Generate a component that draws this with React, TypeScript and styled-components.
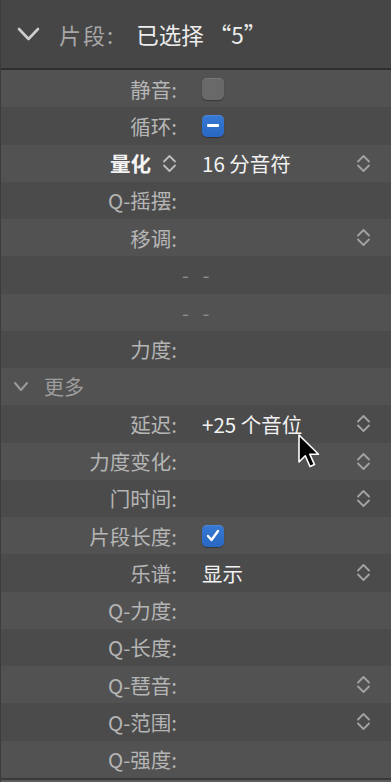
import React from 'react';
import styled, { createGlobalStyle } from 'styled-components';

const GlobalStyle = createGlobalStyle`
  html, body {
    margin: 0;
    padding: 0;
    background: #4c4c4c;
  }
  body {
    font-family: "Noto Sans CJK SC", "Noto Sans", sans-serif;
    -webkit-font-smoothing: antialiased;
  }
`;

const Panel = styled.div`
  position: relative;
  width: 391px;
  height: 782px;
  box-sizing: border-box;
  border-left: 1px solid #3c3c3c;
  background: #4c4c4c;
  overflow: hidden;
  display: flex;
  flex-direction: column;
`;

const Header = styled.div`
  height: 68px;
  flex: 0 0 68px;
  display: flex;
  align-items: center;
  padding-left: 16px;
  background: #464646;
  border-bottom: 2px solid #2e2e2e;
`;

const HeaderTitle = styled.span`
  margin-left: 19px;
  font-size: 22px;
  letter-spacing: 2px;
  color: #a7a7a7;
`;

const HeaderValue = styled.span`
  margin-left: 21px;
  font-size: 22.5px;
  color: #ededed;
`;

const Rows = styled.div`
  display: flex;
  flex-direction: column;
`;

const Row = styled.div<{ $light: boolean }>`
  height: 37.25px;
  flex: 0 0 37.25px;
  display: flex;
  align-items: center;
  background: ${({ $light }) => ($light ? '#525252' : '#4b4b4b')};
`;

const Label = styled.div<{ $bold?: boolean }>`
  width: 176px;
  flex: 0 0 176px;
  display: flex;
  justify-content: flex-end;
  align-items: center;
  gap: 11px;
  font-size: 20.5px;
  font-weight: ${({ $bold }) => ($bold ? 700 : 400)};
  color: ${({ $bold }) => ($bold ? '#f4f4f4' : '#b5b5b5')};
  white-space: nowrap;
`;

const Value = styled.div`
  flex: 1;
  margin-left: 25px;
  display: flex;
  align-items: center;
  font-size: 20.5px;
  color: #f2f2f2;
  white-space: nowrap;
`;

const StepperSlot = styled.div`
  width: 16px;
  flex: 0 0 16px;
  margin-right: 20px;
  display: flex;
  align-items: center;
  justify-content: center;
`;

const Dashes = styled.div`
  margin-left: 181px;
  font-size: 20px;
  color: #8c8c8c;
  word-spacing: 9px;
`;

const SectionToggle = styled.div`
  display: flex;
  align-items: center;
  gap: 15px;
  padding-left: 12px;
  font-size: 20px;
  color: #9d9d9d;
`;

const Checkbox = styled.div<{ $on?: boolean }>`
  width: 22px;
  height: 22px;
  border-radius: 5px;
  display: flex;
  align-items: center;
  justify-content: center;
  background: ${({ $on }) =>
    $on ? 'linear-gradient(#3779d4, #2867c2)' : '#696969'};
  box-shadow: inset 0 1px 0 rgba(255, 255, 255, 0.1),
    0 1px 1px rgba(0, 0, 0, 0.35);
`;

const Minus = styled.div`
  width: 12px;
  height: 3px;
  border-radius: 1px;
  background: #ffffff;
`;

const Footer = styled.div`
  flex: 1;
  border-top: 2px solid #3a3a3a;
  background: #5c5c5c;
`;

const Cursor = styled.svg`
  position: absolute;
  left: 295px;
  top: 432px;
`;

const Stepper = ({ color = '#a3a3a3' }: { color?: string }) => (
  <svg width="15" height="19" viewBox="0 0 15 19">
    <polyline
      points="2,7.5 7.5,2 13,7.5"
      fill="none"
      stroke={color}
      strokeWidth="1.8"
      strokeLinecap="round"
      strokeLinejoin="round"
    />
    <polyline
      points="2,11.5 7.5,17 13,11.5"
      fill="none"
      stroke={color}
      strokeWidth="1.8"
      strokeLinecap="round"
      strokeLinejoin="round"
    />
  </svg>
);

const Chevron = ({ w, h, color, stroke }: { w: number; h: number; color: string; stroke: number }) => (
  <svg width={w + 4} height={h + 4} viewBox={`0 0 ${w + 4} ${h + 4}`}>
    <polyline
      points={`2,2 ${w / 2 + 2},${h + 2} ${w + 2},2`}
      fill="none"
      stroke={color}
      strokeWidth={stroke}
      strokeLinecap="round"
      strokeLinejoin="round"
    />
  </svg>
);

interface FieldProps {
  label?: string;
  light: boolean;
  stepper?: boolean;
  children?: React.ReactNode;
}

const Field = ({ label, light, stepper, children }: FieldProps) => (
  <Row $light={light}>
    <Label>{label}</Label>
    <Value>{children}</Value>
    <StepperSlot>{stepper && <Stepper />}</StepperSlot>
  </Row>
);

const App = () => {
  return (
    <>
      <GlobalStyle />
      <Panel>
        <Header>
          <Chevron w={19} h={10} color="#cdcdcd" stroke={2.6} />
          <HeaderTitle>片段:</HeaderTitle>
          <HeaderValue>已选择 “5”</HeaderValue>
        </Header>
        <Rows>
          <Field label="静音:" light>
            <Checkbox />
          </Field>
          <Field label="循环:" light={false}>
            <Checkbox $on>
              <Minus />
            </Checkbox>
          </Field>
          <Row $light>
            <Label $bold>
              量化
              <Stepper color="#bdbdbd" />
            </Label>
            <Value>16 分音符</Value>
            <StepperSlot>
              <Stepper />
            </StepperSlot>
          </Row>
          <Field label="Q-摇摆:" light={false} />
          <Field label="移调:" light stepper />
          <Row $light={false}>
            <Dashes>- -</Dashes>
          </Row>
          <Row $light>
            <Dashes>- -</Dashes>
          </Row>
          <Field label="力度:" light={false} />
          <Row $light>
            <SectionToggle>
              <Chevron w={12} h={7} color="#9a9a9a" stroke={2} />
              更多
            </SectionToggle>
          </Row>
          <Field label="延迟:" light={false} stepper>
            +25 个音位
          </Field>
          <Field label="力度变化:" light stepper />
          <Field label="门时间:" light={false} stepper />
          <Field label="片段长度:" light>
            <Checkbox $on>
              <svg width="14" height="13" viewBox="0 0 14 13">
                <polyline
                  points="2,7 5.5,11 12,2"
                  fill="none"
                  stroke="#ffffff"
                  strokeWidth="2.4"
                  strokeLinecap="round"
                  strokeLinejoin="round"
                />
              </svg>
            </Checkbox>
          </Field>
          <Field label="乐谱:" light={false} stepper>
            显示
          </Field>
          <Field label="Q-力度:" light />
          <Field label="Q-长度:" light={false} />
          <Field label="Q-琶音:" light stepper />
          <Field label="Q-范围:" light={false} stepper />
          <Field label="Q-强度:" light />
        </Rows>
        <Footer />
        <Cursor width="32" height="40" viewBox="0 0 32 40">
          <path
            d="M3 3 L3 30 L9.3 23.8 L14 34.5 L18.5 32.6 L13.8 22.2 L22.5 22.2 Z"
            fill="#000000"
            stroke="#ffffff"
            strokeWidth="1.6"
            strokeLinejoin="round"
          />
        </Cursor>
      </Panel>
    </>
  );
};

export default App;
